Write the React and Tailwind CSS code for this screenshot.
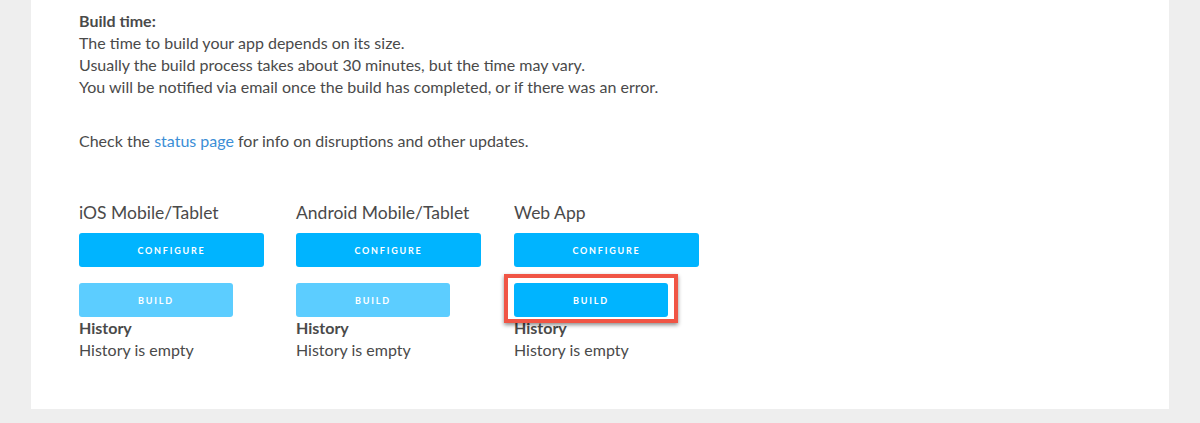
export default function App() {
  const cols = [
    { title: "iOS Mobile/Tablet", highlight: false, ml: "" },
    { title: "Android Mobile/Tablet", highlight: false, ml: "ml-[32px]" },
    { title: "Web App", highlight: true, ml: "ml-[33px]" },
  ];
  return (
    <div className="w-[1200px] h-[423px] bg-[#eeeeee] overflow-hidden" style={{ fontFamily: '"Lato", "Open Sans", sans-serif' }}>
      <div className="ml-[31px] w-[1138px] h-[409px] bg-white pl-[48px] pt-[10px] text-[#4a4a4a] text-[16px] leading-[22px]">
        <p className="font-bold">Build time:</p>
        <p>The time to build your app depends on its size.</p>
        <p>Usually the build process takes about 30 minutes, but the time may vary.</p>
        <p>You will be notified via email once the build has completed, or if there was an error.</p>
        <p className="mt-[32px]">
          Check the <a className="text-[#3b8ed6]">status page</a> for info on disruptions and other updates.
        </p>
        <div className="mt-[49px] flex">
          {cols.map((c) => (
            <div key={c.title} className={"w-[185px] flex flex-col " + c.ml}>
              <div className="text-[17.5px] leading-[24px]">{c.title}</div>
              <button className="mt-[8px] h-[34px] w-[185px] rounded-[3px] bg-[#00b4ff] text-white text-[9px] font-bold tracking-[1.8px] leading-none">
                CONFIGURE
              </button>
              <div className="relative mt-[16px] w-[154px] h-[34px]">
                <button
                  className={
                    "h-[34px] w-[154px] rounded-[3px] text-white text-[9px] font-bold tracking-[1.8px] leading-none " +
                    (c.highlight ? "bg-[#00b4ff]" : "bg-[#5ccdff]")
                  }
                >
                  BUILD
                </button>
                {c.highlight && (
                  <div className="absolute left-[-10px] top-[-9px] w-[174px] h-[49px] border-[4px] border-[#f05545] shadow-[0_2px_4px_rgba(0,0,0,0.45)]" />
                )}
              </div>
              <div className="font-bold leading-[22px]">History</div>
              <div className="leading-[22px]">History is empty</div>
            </div>
          ))}
        </div>
      </div>
    </div>
  );
}
